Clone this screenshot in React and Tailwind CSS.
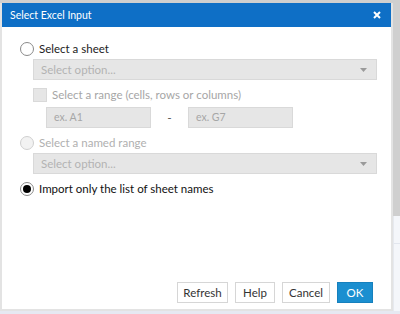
const font = { fontFamily: 'Lato, "Open Sans", Arial, sans-serif' }

function Radio({ checked, disabled }) {
    return (
        <span
            className={`w-[14px] h-[14px] rounded-full border flex items-center justify-center ${
                disabled ? 'border-[#d0d0d0] bg-[#f2f2f2]' : 'border-[#8a8a8a] bg-white'
            }`}
        >
            {checked && <span className="w-[8px] h-[8px] rounded-full bg-black" />}
        </span>
    )
}

function Select() {
    return (
        <div className="h-[21px] bg-[#e6e6e6] border border-[#d9d9d9] flex items-center justify-between pl-[7px] pr-[9px]">
            <span className="text-[11.5px] leading-[14px] text-[#b3b3b3]">Select option...</span>
            <svg width="7" height="4" viewBox="0 0 7 4">
                <path d="M0 0h7L3.5 4z" fill="#9a9a9a" />
            </svg>
        </div>
    )
}

export default function App() {
    return (
        <div className="w-[400px] h-[314px] bg-[#d6d6d6] flex flex-col overflow-hidden" style={font}>
            <div className="h-[3px] bg-[#cfcfcf]" />
            <div className="flex flex-1">
                {/* Dialog */}
                <div className="w-[393px] flex flex-col bg-white border-l-2 border-b-2 border-r-2 border-[#e3e3e3]">
                    <div className="h-[24px] bg-[#0e6fc6] flex items-center justify-between pl-[8px] pr-[10px] text-white">
                        <span className="text-[10.5px] mt-[1px]">Select Excel Input</span>
                        <svg width="8" height="8" viewBox="0 0 8 8">
                            <path d="M1 1l6 6M7 1l-6 6" stroke="white" strokeWidth="2" />
                        </svg>
                    </div>

                    <div className="flex-1 flex flex-col pl-[18px] pr-[14px] pt-[15px]">
                        <div className="flex items-center gap-[5px] leading-[14px]">
                            <Radio />
                            <span className="text-[11.5px] text-[#222]">Select a sheet</span>
                        </div>
                        <div className="ml-[13px] mt-[3px]">
                            <Select />
                        </div>
                        <div className="ml-[13px] mt-[8px] flex items-center gap-[5px] leading-[14px]">
                            <span className="w-[14px] h-[14px] bg-[#e6e6e6] border border-[#d9d9d9]" />
                            <span className="text-[11.5px] text-[#a6a6a6]">Select a range (cells, rows or columns)</span>
                        </div>
                        <div className="ml-[26px] mt-[5px] flex items-center">
                            <div className="w-[105px] h-[21px] bg-[#e6e6e6] border border-[#d9d9d9] flex items-center pl-[7px]">
                                <span className="text-[10.5px] text-[#a6a6a6]">ex. A1</span>
                            </div>
                            <span className="w-[37px] text-center text-[12px] text-[#555]">-</span>
                            <div className="w-[105px] h-[21px] bg-[#e6e6e6] border border-[#d9d9d9] flex items-center pl-[7px]">
                                <span className="text-[10.5px] text-[#a6a6a6]">ex. G7</span>
                            </div>
                        </div>
                        <div className="flex items-center gap-[5px] mt-[8px] leading-[14px]">
                            <Radio disabled />
                            <span className="text-[11.5px] text-[#b0b0b0]">Select a named range</span>
                        </div>
                        <div className="ml-[13px] mt-[3px]">
                            <Select />
                        </div>
                        <div className="flex items-center gap-[5px] mt-[8px] leading-[14px]">
                            <Radio checked />
                            <span className="text-[11.5px] text-[#111]">Import only the list of sheet names</span>
                        </div>

                        <div className="mt-auto mb-[6px] flex justify-end gap-[7px] pr-[4px]">
                            <button className="w-[51px] h-[21px] border border-[#d6d6d6] bg-white text-[11.5px] text-[#333]">Refresh</button>
                            <button className="w-[40px] h-[21px] border border-[#d6d6d6] bg-white text-[11.5px] text-[#333]">Help</button>
                            <button className="w-[48px] h-[21px] border border-[#d6d6d6] bg-white text-[11.5px] text-[#333]">Cancel</button>
                            <button className="w-[36px] h-[21px] bg-[#1b8fd0] border border-[#1680bd] text-[11.5px] text-white">OK</button>
                        </div>
                    </div>
                </div>

                {/* Background to the right */}
                <div className="flex-1 flex flex-col">
                    <div className="h-[213px] bg-[#cfcfcf]" />
                    <div className="flex-1 bg-[#f4f6fa] border-l border-[#e6e9ef]">
                        <div className="mt-[27px] h-px bg-[#e2e6ee]" />
                    </div>
                </div>
            </div>
            <div className="h-[3px] bg-[#e6e9f2]" />
        </div>
    )
}
